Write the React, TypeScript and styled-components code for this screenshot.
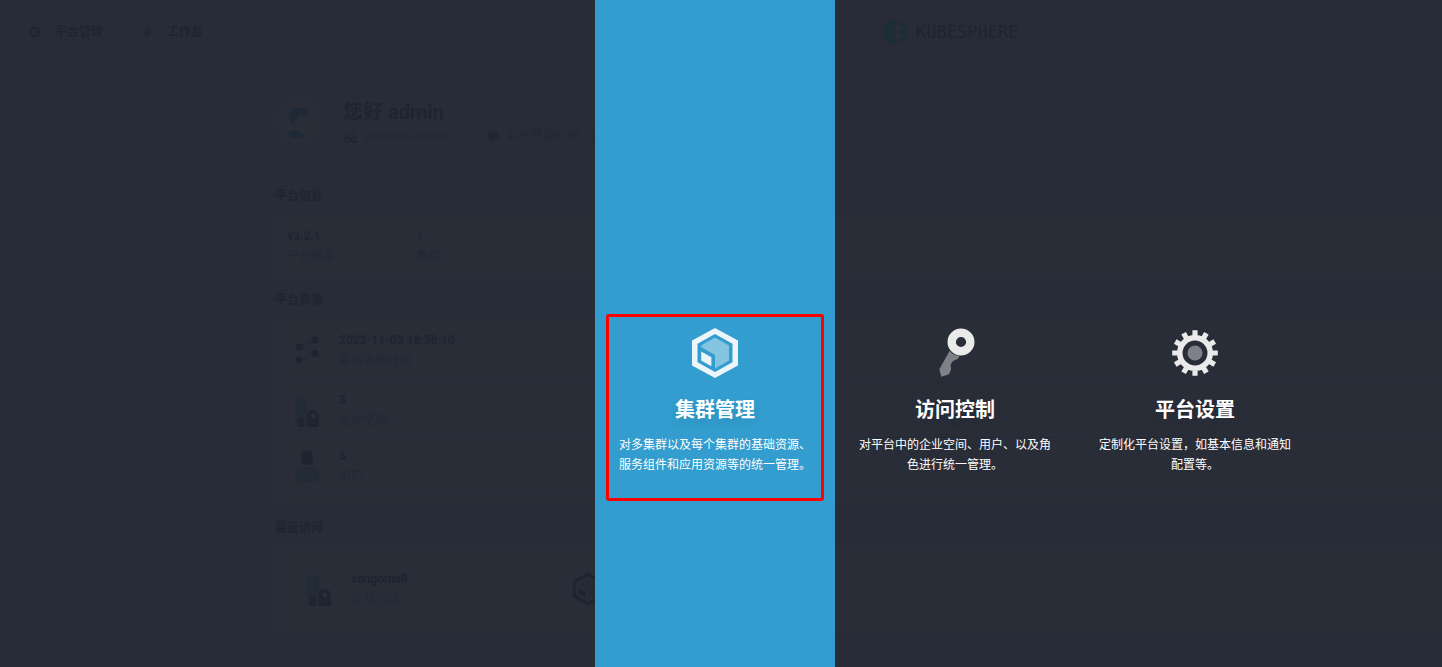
import React from "react";
import styled, { createGlobalStyle } from "styled-components";

const color = {
  page: "#282c38",
  card: "#292d38",
  line: "#262a36",
  strong: "#1e2430",
  muted: "#222834",
  tint: "#232b36",
  link: "#1e2734",
  portrait: "#1d2937",
  logo: "#1c2e34",
  active: "#329dce",
  mark: "#ff0000",
};

const GlobalStyle = createGlobalStyle`
  * { box-sizing: border-box; }
  body {
    margin: 0;
    background: ${color.page};
    font-family: Roboto, "Noto Sans CJK SC", sans-serif;
    font-size: 12px;
    line-height: 20px;
  }
  h1, h2, h3, p, ul { margin: 0; padding: 0; }
  a { color: inherit; text-decoration: none; }
  svg { display: block; flex: none; }
`;

const Page = styled.div`
  position: relative;
  min-height: 100vh;
  overflow: hidden;
  background: ${color.page};
`;

const Header = styled.header`
  display: grid;
  grid-template-columns: 857px 1fr;
  align-items: center;
  height: 64px;
  padding-left: 27px;
`;

const TopNav = styled.nav`
  display: flex;
  gap: 36px;
`;

const TopLink = styled.a`
  display: flex;
  align-items: center;
  gap: 12px;
  color: ${color.strong};
  font-weight: 700;
`;

const Logo = styled.a`
  display: flex;
  align-items: center;
  gap: 8px;
  color: ${color.strong};
  font-family: "DejaVu Sans Mono", monospace;
  font-size: 17px;
`;

const Main = styled.main`
  padding: 34px 0 35px 275px;
`;

const Profile = styled.section`
  display: flex;
  align-items: center;
  gap: 20px;
  height: 48px;
  margin-bottom: 40px;
`;

const Greeting = styled.h1`
  color: ${color.strong};
  font-size: 20px;
  line-height: 28px;
  font-weight: 700;
`;

const Facts = styled.div`
  display: flex;
  gap: 40px;
`;

const Fact = styled.span`
  display: flex;
  align-items: center;
  gap: 6px;
  color: ${color.muted};
  white-space: nowrap;
`;

const SectionTitle = styled.h2`
  margin-bottom: 8px;
  color: ${color.strong};
  font-size: 12px;
  line-height: 20px;
  font-weight: 700;
`;

const Card = styled.section<{ $foot?: boolean }>`
  margin-bottom: 12px;
  padding-bottom: ${(p) => (p.$foot ? 12 : 0)}px;
  border-radius: 4px 0 0 4px;
  background: ${color.card};
`;

const Summary = styled.div`
  display: grid;
  grid-template-columns: 117px 117px;
  gap: 12px;
  padding: 12px;
`;

const Row = styled.div<{ $tall?: boolean }>`
  display: flex;
  align-items: center;
  gap: 12px;
  height: ${(p) => (p.$tall ? 64 : 56)}px;
  padding: 0 12px;
  border-bottom: 1px solid ${color.line};
`;

const Recent = styled.div`
  display: grid;
  grid-template-columns: 257px 257px;
  gap: 12px;
  align-items: center;
  min-height: 86px;
  padding: 0 24px;
`;

const RecentItem = styled.a`
  display: flex;
  align-items: center;
  gap: 12px;
`;

const Value = styled.div<{ $link?: boolean }>`
  color: ${(p) => (p.$link ? color.link : color.strong)};
  font-weight: 700;
`;

const Label = styled.div`
  color: ${color.muted};
`;

const Overlay = styled.nav`
  position: absolute;
  inset: 0;
  display: flex;
  padding-left: 595px;
`;

const Panel = styled.a<{ $active?: boolean }>`
  flex: 0 0 240px;
  padding: 314px 11px 0;
  color: #fff;
  background: ${(p) => (p.$active ? color.active : "transparent")};
`;

const PanelBody = styled.div<{ $marked?: boolean }>`
  display: flex;
  flex-direction: column;
  align-items: center;
  padding: 6px 10px 23px;
  border: 3px solid ${(p) => (p.$marked ? color.mark : "transparent")};
  border-radius: 3px;
`;

const PanelTitle = styled.h3`
  margin: 11px 0 9px;
  font-size: 20px;
  line-height: 32px;
  font-weight: 700;
  text-shadow: 0 4px 8px rgba(36, 46, 66, 0.1);
`;

const PanelText = styled.p`
  text-align: center;
`;

type IconProps = { size?: number; main?: string; soft?: string };

const WHITE = "rgba(255,255,255,0.9)";
const WHITE_SOFT = "rgba(255,255,255,0.4)";

function ClusterIcon({ size = 60, main = WHITE, soft = WHITE_SOFT }: IconProps) {
  return (
    <svg width={size} height={size} viewBox="0 0 60 60" aria-hidden="true">
      <path
        fill={main}
        fillRule="evenodd"
        d="M30 5 53 17.500V42.500L30 55 7 42.500V17.500ZM30 11 12.500 20.800V39.200L30 49 47.500 39.200V20.800Z"
      />
      <path fill={soft} d="M30 14.500 44 22.500V37.500L30 45.500V32L16 24V22.500Z" />
      <path fill={main} d="M16.200 28.500 26.400 34.300V43.200L16.200 37.600Z" />
    </svg>
  );
}

function KeyIcon() {
  return (
    <svg width="60" height="60" viewBox="0 0 60 60" aria-hidden="true">
      <path
        fill={WHITE_SOFT}
        d="M24.700 27.700C27 31 30.500 32.700 34.700 32.700L32.500 36.200C29 36.500 27.500 38 25.700 41.500 25.200 43.500 26.500 45 26 46.500L24 51.300 16.300 53.700 14.300 46.300Z"
      />
      <circle cx="36" cy="19" r="9.300" fill="none" stroke={WHITE} strokeWidth="8.400" />
    </svg>
  );
}

function GearIcon({ size = 60, main = WHITE, soft = WHITE_SOFT }: IconProps) {
  const teeth = Array.from({ length: 12 }, (_, i) => {
    const a = (i * Math.PI) / 6;
    const at = (r: number, w: number) =>
      `${30 + r * Math.cos(a) - w * Math.sin(a)} ${30 + r * Math.sin(a) + w * Math.cos(a)}`;
    return `M${at(16, -2.6)}L${at(22.8, -2.6)}L${at(22.8, 2.6)}L${at(16, 2.6)}Z`;
  }).join("");
  const ring =
    "M30 12A18 18 0 0 1 30 48A18 18 0 0 1 30 12ZM30 17.500A12.500 12.500 0 0 0 30 42.500A12.500 12.500 0 0 0 30 17.500Z";
  return (
    <svg width={size} height={size} viewBox="0 0 60 60" aria-hidden="true">
      <path fill={main} d={ring + teeth} />
      <circle cx="30" cy="30" r="7.500" fill={soft} />
    </svg>
  );
}

function DialIcon() {
  return (
    <svg width="16" height="16" viewBox="0 0 16 16" aria-hidden="true">
      <circle cx="8" cy="8" r="5.500" fill={color.tint} stroke={color.line} />
      <path fill={color.strong} d="M7 5h2v3h2l-3 3-3-3h2Z" />
    </svg>
  );
}

function LogoMark() {
  return (
    <svg width="24" height="28" viewBox="0 0 24 28" aria-hidden="true">
      <g fill={color.logo}>
        <path d="M12 0V10L7 14 12 18V28L0 21V7Z" />
        <path d="M15 2 21.500 5.500 15 9.500Z" />
        <path d="M24 8V20L13.500 14Z" />
        <path d="M15 18.500 21.500 22.500 15 26Z" />
      </g>
    </svg>
  );
}

function Avatar() {
  return (
    <svg width="48" height="48" viewBox="0 0 48 48" role="img" aria-label="admin">
      <circle cx="24" cy="24" r="24" fill={color.card} />
      <path
        fill={color.portrait}
        d="M15 15C17 11 22 10 26 10L33 10V15C31 18 27 17 23 17 22 19 22 22 21 24L19.500 20 18 22 20 28C16 25 14 20 15 15ZM12 36C14 33 17 32 20 32L29 38C28 41 17 41 12 36Z"
      />
    </svg>
  );
}

function RoleIcon() {
  return (
    <svg width="15" height="14" viewBox="0 0 15 14" aria-hidden="true">
      <path fill={color.tint} d="M4 1h7l1 4H3ZM1 5h13v2H1Z" />
      <g fill="none" stroke={color.strong} strokeWidth="1.300">
        <circle cx="4" cy="10.500" r="2.500" />
        <circle cx="11" cy="10.500" r="2.500" />
        <path d="M6.500 10h2" />
      </g>
    </svg>
  );
}

function ClockIcon() {
  return (
    <svg width="14" height="14" viewBox="0 0 14 14" aria-hidden="true">
      <circle cx="7" cy="7" r="6" fill={color.muted} />
      <path d="M4 5.500 7 8.500 10 5.500" fill="none" stroke={color.strong} strokeWidth="1.500" />
    </svg>
  );
}

function ShareIcon() {
  return (
    <svg width="40" height="40" viewBox="0 0 40 40" aria-hidden="true">
      <path
        d="M28 10 12 17 28 23.500 12 30"
        fill="none"
        stroke={color.tint}
        strokeWidth="2"
      />
      <g fill={color.strong}>
        <circle cx="28" cy="10" r="3.500" />
        <circle cx="12" cy="17" r="3.500" />
        <circle cx="28" cy="23.500" r="3.500" />
        <circle cx="12" cy="30" r="3.500" />
      </g>
    </svg>
  );
}

function WorkspaceIcon() {
  return (
    <svg width="40" height="40" viewBox="0 0 40 40" aria-hidden="true">
      <path fill={color.tint} d="M8 7h3V4h5v3h4v30H8Z" />
      <path fill={color.strong} d="M11.500 28h5v9h-5Z" />
      <path
        fill={color.strong}
        fillRule="evenodd"
        d="M20 37V26a6 6 0 0 1 12 0v11ZM26 23.500a2.500 2.500 0 1 0 0 5 2.500 2.500 0 0 0 0-5Z"
      />
    </svg>
  );
}

function UserIcon() {
  return (
    <svg width="40" height="40" viewBox="0 0 40 40" aria-hidden="true">
      <rect x="14" y="4" width="12" height="15" rx="6" fill={color.strong} />
      <path fill={color.tint} d="M8 35V27C9 23 14 21 20 21S31 23 32 27V35Q20 37 8 35Z" />
    </svg>
  );
}

const resources = [
  { value: "2022-11-03 18:58:10", label: "最后更新时间", icon: <ShareIcon /> },
  { value: "3", label: "企业空间", icon: <WorkspaceIcon /> },
  { value: "6", label: "用户", icon: <UserIcon /> },
];

const panels = [
  {
    title: "集群管理",
    text: "对多集群以及每个集群的基础资源、服务组件和应用资源等的统一管理。",
    icon: <ClusterIcon />,
    active: true,
  },
  {
    title: "访问控制",
    text: "对平台中的企业空间、用户、以及角色进行统一管理。",
    icon: <KeyIcon />,
  },
  {
    title: "平台设置",
    text: "定制化平台设置，如基本信息和通知配置等。",
    icon: <GearIcon />,
  },
];

export default function App() {
  return (
    <Page lang="zh-CN">
      <GlobalStyle />
      <Header>
        <TopNav>
          <TopLink href="#platform">
            <GearIcon size={16} main={color.strong} soft={color.tint} />
            平台管理
          </TopLink>
          <TopLink href="#workbench">
            <DialIcon />
            工作台
          </TopLink>
        </TopNav>
        <Logo href="#home">
          <LogoMark />
          KUBESPHERE
        </Logo>
      </Header>

      <Main>
        <Profile>
          <Avatar />
          <div>
            <Greeting>您好 admin</Greeting>
            <Facts>
              <Fact>
                <RoleIcon />
                platform-admin
              </Fact>
              <Fact>
                <ClockIcon />
                最后登录时间：2
              </Fact>
            </Facts>
          </div>
        </Profile>

        <SectionTitle>平台信息</SectionTitle>
        <Card>
          <Summary>
            <div>
              <Value>v3.2.1</Value>
              <Label>平台版本</Label>
            </div>
            <div>
              <Value $link>1</Value>
              <Label>集群</Label>
            </div>
          </Summary>
        </Card>

        <SectionTitle>平台资源</SectionTitle>
        <Card $foot>
          {resources.map((r, i) => (
            <Row key={r.label} $tall={i === 0}>
              {r.icon}
              <div>
                <Value>{r.value}</Value>
                <Label>{r.label}</Label>
              </div>
            </Row>
          ))}
        </Card>

        <SectionTitle>最近访问</SectionTitle>
        <Card>
          <Recent>
            <RecentItem href="#sangomall">
              <WorkspaceIcon />
              <div>
                <Value>sangomall</Value>
                <Label>企业空间</Label>
              </div>
            </RecentItem>
            <RecentItem href="#cluster" aria-label="集群">
              <ClusterIcon size={40} main={color.strong} soft={color.tint} />
            </RecentItem>
          </Recent>
        </Card>
      </Main>

      <Overlay aria-label="平台管理">
        {panels.map((p) => (
          <Panel key={p.title} href="#panel" $active={p.active}>
            <PanelBody $marked={p.active}>
              {p.icon}
              <PanelTitle>{p.title}</PanelTitle>
              <PanelText>{p.text}</PanelText>
            </PanelBody>
          </Panel>
        ))}
      </Overlay>
    </Page>
  );
}
